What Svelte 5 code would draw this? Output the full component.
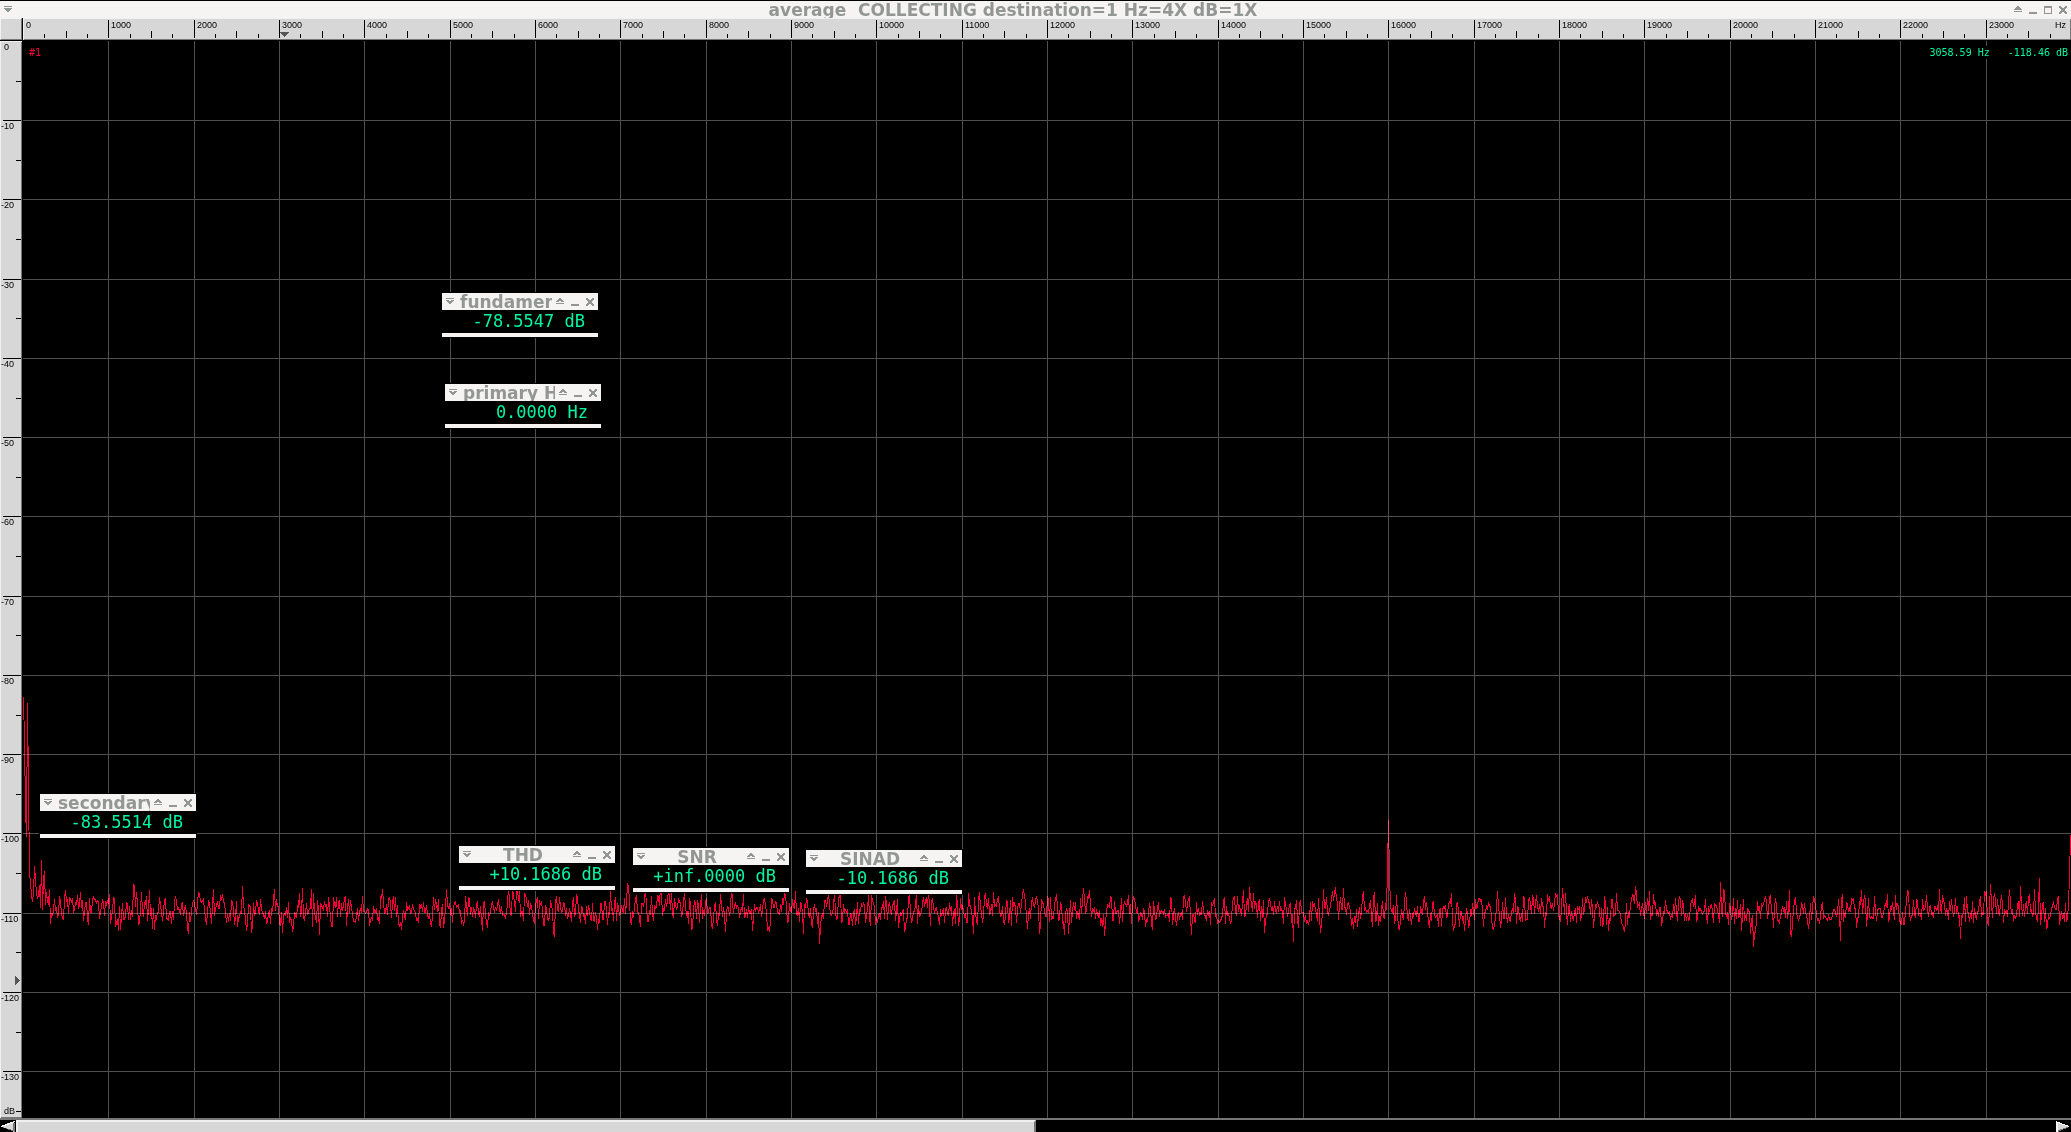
<script>
  const TOP_OFFSET = 0.5;
  const DB_SPAN = 135.9;
  const KHZ_SPAN = 24;
  const BINS = 2048;

  let plotW = $state(0);
  let plotH = $state(0);

  const meters = [
    { title: 'fundamental', value: '-78.5547 dB', x: 442, y: 293 },
    { title: 'primary Hz', value: '0.0000 Hz', x: 445, y: 384 },
    { title: 'secondary', value: '-83.5514 dB', x: 40, y: 794 },
    { title: 'THD', value: '+10.1686 dB', x: 459, y: 846 },
    { title: 'SNR', value: '+inf.0000 dB', x: 633, y: 848 },
    { title: 'SINAD', value: '-10.1686 dB', x: 806, y: 850 }
  ];

  const xAt = (khz) => Math.floor(0.37 + (khz * plotW) / KHZ_SPAN);
  const yAt = (db) => Math.floor(TOP_OFFSET + (db * plotH) / DB_SPAN);

  const freqTicks = $derived(
    Array.from({ length: 96 }, (_, i) => ({
      x: xAt(i / 4),
      len: i % 4 === 0 ? 18 : i % 2 === 0 ? 7 : 4,
      label: i % 4 === 0 ? String(i * 250) : ''
    }))
  );
  const dbTicks = $derived(
    Array.from({ length: 28 }, (_, i) => ({
      y: yAt(i * 5),
      len: i % 2 === 0 ? 18 : 5,
      label: i % 2 === 0 ? (i === 0 ? '0' : String(i * -5)) : ''
    }))
  );
  const gridX = $derived(freqTicks.filter((t, i) => t.label && i > 0));
  const gridY = $derived(dbTicks.filter((t, i) => t.label && i > 0));

  // Levels in dB of the bins that stand out of the noise floor.
  const peaks = {
    0: -82.7, 1: -88.4, 2: -96.8, 3: -100.4, 4: -83.5, 5: -94.1, 6: -104.9,
    7: -106, 8: -107.7, 9: -108.6, 10: -107.4, 11: -104, 12: -105.8,
    13: -107.4, 14: -108.2, 15: -107.7, 16: -106.4, 17: -109.3, 18: -103.3,
    19: -109.6, 20: -105.8, 21: -104.7, 22: -109, 26: -106.9, 110: -106.3,
    111: -106.6, 251: -106.9, 288: -106.9, 796: -113.9, 1270: -113.6,
    1364: -104.2, 1365: -98.2, 1366: -105.2, 1539: -106.8, 1626: -107.2,
    1697: -106, 1730: -114.2, 1817: -113.5, 1937: -113.3, 2016: -105.5,
    2046: -105.4, 2047: -100.1
  };

  function makeSpectrum() {
    let seed = 20117;
    const rnd = () => {
      seed = (seed * 1664525 + 1013904223) % 4294967296;
      return seed / 4294967296;
    };
    const gauss = () => rnd() + rnd() + rnd() + rnd() - 2;
    const out = [];
    let prev = 0;
    for (let i = 0; i < BINS; i++) {
      const g = gauss();
      const n = g * 2 + prev * 0.5;
      prev = g;
      const lift = 1.6 * Math.exp(-i / 60);
      out.push(peaks[i] ?? -109.7 + lift + n);
    }
    return out;
  }
  const spectrum = makeSpectrum();

  const tracePath = $derived(
    spectrum
      .map((db, i) => {
        const x = Math.floor((i * plotW) / BINS) + 0.5;
        const y = Math.round(TOP_OFFSET - (db * plotH) / DB_SPAN);
        return (i ? 'L' : 'M') + x + ' ' + y;
      })
      .join('')
  );
</script>

{#snippet menuIcon()}
  <svg width="8" height="7" viewBox="0 0 8 7" shape-rendering="crispEdges" aria-hidden="true">
    <path d="M0 0h8v1H0zM0 2h8v1H7v1H6v1H5v1H3V5H2V4H1V3H0z" />
  </svg>
{/snippet}
{#snippet shadeIcon()}
  <svg width="8" height="7" viewBox="0 0 8 7" shape-rendering="crispEdges" aria-hidden="true">
    <path d="M3 0h2v1h1v1h1v1h1v1H0V3h1V2h1V1h1zM0 5h8v1H0z" />
  </svg>
{/snippet}
{#snippet smallMenuIcon()}
  <svg width="8" height="7" viewBox="0 0 8 7" shape-rendering="crispEdges" aria-hidden="true">
    <path fill-rule="evenodd" d="M0 0h8v1H0zM0 2h8v1H7v1H6v1H5v1H3V5H2V4H1V3H0zM3 2v1h2V2z" />
  </svg>
{/snippet}
{#snippet smallShadeIcon()}
  <svg width="8" height="7" viewBox="0 0 8 7" shape-rendering="crispEdges" aria-hidden="true">
    <path fill-rule="evenodd" d="M3 0h2v1h1v1h1v1h1v1H0V3h1V2h1V1h1zM3 3v1h2V3zM0 5h8v1H0z" />
  </svg>
{/snippet}
{#snippet minIcon()}
  <svg width="8" height="8" viewBox="0 0 8 8" shape-rendering="crispEdges" aria-hidden="true">
    <path d="M0 6h8v2H0z" />
  </svg>
{/snippet}
{#snippet maxIcon()}
  <svg width="8" height="8" viewBox="0 0 8 8" shape-rendering="crispEdges" aria-hidden="true">
    <path fill-rule="evenodd" d="M0 0h8v8H0zM1 2v5h6V2z" />
  </svg>
{/snippet}
{#snippet closeIcon()}
  <svg width="8" height="8" viewBox="0 0 8 8" shape-rendering="crispEdges" aria-hidden="true">
    <path d="M0 0h2v1h1v1h2V1h1V0h2v2H7v1H6v2h1v1h1v2H6V7H5V6H3v1H2v1H0V6h1V5h1V3H1V2H0z" />
  </svg>
{/snippet}

<div class="app">
  <header class="titlebar">
    <button aria-label="Window menu">{@render menuIcon()}</button>
    <h1>average&nbsp; COLLECTING destination=1 Hz=4X dB=1X</h1>
    <div class="controls">
      <button aria-label="Shade">{@render shadeIcon()}</button>
      <button aria-label="Minimize">{@render minIcon()}</button>
      <button aria-label="Maximize">{@render maxIcon()}</button>
      <button aria-label="Close">{@render closeIcon()}</button>
    </div>
  </header>

  <main class="scope">
    <div class="corner"></div>

    <div class="ruler-x">
      <svg width="100%" height="22" shape-rendering="crispEdges">
        {#each freqTicks as t}
          <rect x={t.x} y={20 - t.len} width="1" height={t.x > 0 ? t.len : 0} />
          {#if t.label}
            <text x={t.x + 3} y="10">{t.label}</text>
          {/if}
        {/each}
        <text x={plotW - 5} y="10" text-anchor="end">Hz</text>
        <path class="marker" d="M{xAt(3.05859) - 4} 14h9l-4 5h-1z" />
      </svg>
    </div>

    <div class="ruler-y">
      <svg width="22" height="100%" shape-rendering="crispEdges">
        {#each dbTicks as t}
          <rect x={21 - t.len} y={t.y} width={t.y > 0 ? t.len : 0} height="1" />
          {#if t.label}
            <text x={t.label === '0' ? 4 : 1} y={t.y + 9}>{t.label}</text>
          {/if}
        {/each}
        <text x="4" y={plotH - 4}>dB</text>
        <path class="marker" d="M15 {yAt(118.46) - 4}v9l5 -4v-1z" />
      </svg>
    </div>

    <section class="plot" bind:clientWidth={plotW} bind:clientHeight={plotH}>
      <svg class="graph" width="100%" height="100%" shape-rendering="crispEdges" role="img" aria-label="Averaged spectrum">
        {#each gridX as g}
          <rect class="grid" x={g.x} y="0" width="1" height="100%" />
        {/each}
        {#each gridY as g}
          <rect class="grid" x="0" y={g.y} width="100%" height="1" />
        {/each}
        <path class="trace" d={tracePath} />
      </svg>
      <div class="legend">
        <span class="trace-id">#1</span>
        <span class="readout">3058.59 Hz&nbsp;&nbsp; -118.46 dB</span>
      </div>
    </section>
  </main>

  <footer class="scrollbar">
    <button class="arrow" aria-label="Scroll left">
      <svg width="14" height="11" viewBox="0 0 14 11" shape-rendering="crispEdges" aria-hidden="true">
        <path class="face" d="M13 0v11L0 5z" />
        <path class="light" d="M14 0L0 5v1L12 2z" />
        <path class="dark" d="M12 2h2v9L1 6l11 3z" />
      </svg>
    </button>
    <div class="track">
      <div class="thumb"></div>
    </div>
    <button class="arrow" aria-label="Scroll right">
      <svg width="14" height="11" viewBox="0 0 14 11" shape-rendering="crispEdges" aria-hidden="true">
        <path class="face" d="M0 0v11L13 5z" />
        <path class="light" d="M0 0v11h2V2l11 4V5z" />
        <path class="dark" d="M2 11V9l9 -3h2z" />
      </svg>
    </button>
  </footer>

  {#each meters as m}
    <article class="meter" style:left="{m.x}px" style:top="{m.y}px">
      <header>
        <button aria-label="Window menu">{@render smallMenuIcon()}</button>
        <h2><span>{m.title}</span></h2>
        <div class="controls">
          <button aria-label="Shade">{@render smallShadeIcon()}</button>
          <button aria-label="Minimize">{@render minIcon()}</button>
          <button aria-label="Close">{@render closeIcon()}</button>
        </div>
      </header>
      <output>{m.value}</output>
    </article>
  {/each}
</div>

<style>
  :global(body) {
    margin: 0;
    background: #000;
  }
  .app {
    position: relative;
    display: flex;
    flex-direction: column;
    height: 100vh;
    overflow: hidden;
    background: #000;
    font-family: 'DejaVu Sans', sans-serif;
  }
  button {
    display: block;
    padding: 0;
    border: 0;
    background: none;
    fill: #929695;
  }
  button svg {
    display: block;
  }
  h1,
  h2 {
    margin: 0;
    font-size: 17px;
    line-height: 18px;
    font-weight: 700;
    color: #929695;
    white-space: nowrap;
  }
  .controls {
    display: flex;
    align-items: center;
    gap: 7px;
  }
  .titlebar {
    display: flex;
    align-items: center;
    flex: none;
    height: 17px;
    margin-top: 1px;
    padding: 0 4px;
    background: #f6f4f2;
  }
  .titlebar h1 {
    flex: 1;
    text-align: center;
  }
  .scope {
    flex: 1;
    min-height: 0;
    display: grid;
    grid-template-columns: 22px 1fr;
    grid-template-rows: 22px 1fr;
    gap: 1px;
  }
  .corner,
  .ruler-x,
  .ruler-y {
    box-sizing: border-box;
    background: #d7d7d7;
    overflow: hidden;
  }
  .corner {
    border: 1px solid #f2f2f2;
    border-right-color: #777;
    border-bottom-color: #777;
  }
  .ruler-x {
    box-shadow: inset 0 1px #f0f0f0, inset 1px 0 #f0f0f0, inset 0 -1px #777, inset -1px 0 #777;
  }
  .ruler-y {
    box-shadow: inset 1px 0 #f0f0f0, inset 0 1px #f0f0f0, inset -1px 0 #777, inset 0 -1px #777;
  }
  .ruler-x svg,
  .ruler-y svg {
    display: block;
  }
  .ruler-x text,
  .ruler-y text {
    font-family: 'Liberation Sans', sans-serif;
    font-size: 9px;
    fill: #000;
  }
  .marker {
    fill: #555;
  }
  .plot {
    position: relative;
    min-width: 0;
    min-height: 0;
    overflow: hidden;
  }
  .graph {
    position: absolute;
    inset: 0;
  }
  .grid {
    fill: #4f4f4f;
  }
  .trace {
    fill: none;
    stroke: #f50032;
    stroke-width: 1;
    mix-blend-mode: screen;
  }
  .legend {
    position: relative;
    display: flex;
    justify-content: space-between;
    padding: 5px 3px 0 6px;
    font-family: 'DejaVu Sans Mono', monospace;
    font-size: 10px;
    line-height: 13px;
  }
  .legend span {
    background: #000;
  }
  .trace-id {
    color: #f50032;
  }
  .readout {
    color: #00f5a4;
  }
  .scrollbar {
    box-sizing: border-box;
    display: flex;
    flex: none;
    height: 14px;
    border-top: 2px solid #777;
    background: #000;
  }
  .arrow {
    width: 16px;
    padding: 1px 0 0 1px;
  }
  .arrow .face {
    fill: #d7d7d7;
  }
  .arrow .light {
    fill: #f8f8f8;
  }
  .arrow .dark {
    fill: #777;
  }
  .track {
    flex: 1;
  }
  .thumb {
    box-sizing: border-box;
    width: 50%;
    height: 100%;
    background: #d7d7d7;
    border-top: 2px solid #f0f0f0;
    border-left: 2px solid #f0f0f0;
    border-right: 2px solid #777;
  }
  .meter {
    position: absolute;
    width: 156px;
    border-bottom: 4px solid #f6f4f2;
    background: #000;
    outline: 1px solid #000;
  }
  .meter header {
    display: flex;
    align-items: center;
    height: 17px;
    padding: 0 4px;
    background: #f6f4f2;
    overflow: hidden;
  }
  .meter h2 {
    flex: 1;
    min-width: 0;
    display: flex;
    overflow: hidden;
    margin: 0 4px 0 6px;
  }
  .meter h2 span {
    margin: 0 auto;
  }
  .meter output {
    display: block;
    padding-right: 13px;
    text-align: right;
    font-family: 'DejaVu Sans Mono', monospace;
    font-size: 17px;
    line-height: 23px;
    color: #00f5a4;
  }
</style>
